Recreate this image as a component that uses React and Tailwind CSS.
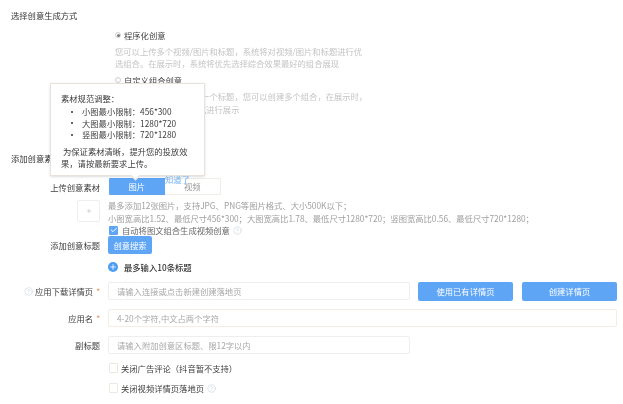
import React from 'react';
import { Check, CircleHelp, Plus } from 'lucide-react';

const font = { fontFamily: '"Noto Sans CJK SC", "Liberation Sans", sans-serif' };

function Radio ({ on, label, className }) {
  return (
    <div className={`flex items-center h-[14px] ${className}`}>
      <span className="flex items-center justify-center w-[6px] h-[6px] rounded-full border border-[#cfcfcf]">
        {on && <span className="w-[3px] h-[3px] rounded-full bg-[#777]" />}
      </span>
      <span className="ml-[3px] text-[#444]">{label}</span>
    </div>
  );
}

function Help ({ className }) {
  return <CircleHelp className={`w-[9px] h-[9px] text-[#c3d3e0] ${className}`} strokeWidth={1.5} />;
}

function Row ({ label, star, help, className, children }) {
  return (
    <div className={`flex items-center gap-[8px] ${className}`}>
      <div className="w-[100px] flex items-center justify-end text-[#3d3d3d] shrink-0">
        {help && <Help className="mr-[2px]" />}
        <span>{label}</span>
        {star && <span className="ml-[3px] text-[#e2925c]">*</span>}
      </div>
      {children}
    </div>
  );
}

function Field ({ placeholder, className }) {
  return (
    <input
      placeholder={placeholder}
      className={`h-[18px] rounded-[2px] border px-[8px] text-[8.3px] placeholder:text-[#a8a8a8] outline-none ${className}`}
    />
  );
}

function CheckLine ({ label, children, className }) {
  return (
    <div className={`flex items-center pl-[109px] h-[10px] ${className}`}>
      <span className="w-[9px] h-[10px] border border-[#f0e8e0] rounded-[1px]" />
      <span className="ml-[3px] text-[#3d3d3d]">{label}</span>
      {children}
    </div>
  );
}

function Tooltip () {
  return (
    <div className="absolute left-[50px] top-[83px] w-[155px] h-[93px] bg-white border border-[#e8e2dc] px-[10px] pt-[9px] text-[#3d3d3d] shadow-sm leading-[11.5px]">
      <div>素材规范调整：</div>
      <ul className="mt-[1.5px]">
        <li className="flex items-center"><span className="ml-[10px] mr-[9px] w-[2px] h-[2px] rounded-full bg-[#333]" />小图最小限制：456*300</li>
        <li className="flex items-center"><span className="ml-[10px] mr-[9px] w-[2px] h-[2px] rounded-full bg-[#333]" />大图最小限制：1280*720</li>
        <li className="flex items-center"><span className="ml-[10px] mr-[9px] w-[2px] h-[2px] rounded-full bg-[#333]" />竖图最小限制：720*1280</li>
      </ul>
      <p className="mt-[4px] leading-[12px] indent-[2px]">为保证素材清晰，提升您的投放效果，请按最新要求上传。</p>
      <span className="absolute left-[81px] -bottom-[4px] w-[7px] h-[7px] rotate-45 bg-white border-r border-b border-[#e8e2dc]" />
    </div>
  );
}

export default function App () {
  return (
    <div className="relative w-[623px] h-[404px] overflow-hidden bg-white text-[8.3px] leading-[14px] blur-[0.5px]" style={font}>
      <div className="pl-[11px] pt-[8px] h-[22px] text-[#333]">选择创意生成方式</div>

      <div className="pl-[115px] text-[#c4c4c4]">
        <Radio on label="程序化创意" className="mt-[6px]" />
        <p className="mt-[3px] leading-[12px]">您可以上传多个视频/图片和标题，系统将对视频/图片和标题进行优<br />选组合。在展示时，系统将优先选择综合效果最好的组合展现</p>
        <Radio label="自定义组合创意" className="mt-[4px]" />
        <p className="mt-[3px] leading-[13px]">您可以上传视频/图片和一个标题，您可以创建多个组合，在展示时，<br />系统将按照您的组合方式进行展示</p>
      </div>

      <div className="pl-[11px] mt-[35px] text-[#333]">添加创意素材</div>

      <Row label="上传创意素材" className="mt-[13px] h-[17px]">
        <div className="flex h-[17px] w-[112px] ml-[1px] text-center leading-[17px]">
          <span className="flex-1 bg-[#5fa5f6] text-white rounded-l-[1px]">图片</span>
          <span className="flex-1 border border-l-0 border-[#f0ede8] text-[#999] leading-[15px] rounded-r-[1px]">视频</span>
        </div>
      </Row>

      <div className="flex gap-[8px] mt-[5px]">
        <div className="w-[100px] flex justify-end shrink-0">
          <div className="flex items-center justify-center w-[23px] h-[22px] border border-[#eeeeee] rounded-[2px] text-[#999]">
            <Plus className="w-[6px] h-[6px]" strokeWidth={1.5} />
          </div>
        </div>
        <div className="text-[#a0a0a0] -mt-[1px] leading-[12.5px] whitespace-nowrap">
          <div>最多添加12张图片，支持JPG、PNG等图片格式、大小500K以下；</div>
          <div>小图宽高比1.52、最低尺寸456*300；大图宽高比1.78、最低尺寸1280*720；竖图宽高比0.56、最低尺寸720*1280；</div>
        </div>
      </div>

      <div className="flex items-center pl-[109px] mt-[1px] h-[10px]">
        <span className="flex items-center justify-center w-[9px] h-[9px] bg-[#5fa5f6] rounded-[1px]">
          <Check className="w-[8px] h-[8px] text-white" strokeWidth={3} />
        </span>
        <span className="ml-[4px] text-[#666]">自动将图文组合生成视频创意</span>
        <Help className="ml-[3px]" />
      </div>

      <Row label="添加创意标题" className="mt-[1px] h-[18px]">
        <button className="w-[44px] h-[18px] bg-[#5fa5f6] text-white rounded-[2px]">创意搜索</button>
      </Row>

      <div className="flex items-center pl-[108px] mt-[7px] h-[12px]">
        <span className="flex items-center justify-center w-[10px] h-[10px] rounded-full bg-[#4d9cf3]">
          <Plus className="w-[8px] h-[8px] text-white" strokeWidth={2.5} />
        </span>
        <span className="ml-[6px] text-[#333] font-medium">最多输入10条标题</span>
      </div>

      <Row label="应用下载详情页" star help className="mt-[9px] h-[18px]">
        <Field placeholder="请输入连接或点击新建创建落地页" className="w-[302px] border-[#eeeeee]" />
        <button className="w-[95px] h-[19px] bg-[#5fa5f6] text-white rounded-[2px]">使用已有详情页</button>
        <button className="ml-[1px] w-[95px] h-[19px] bg-[#5fa5f6] text-white rounded-[2px]">创建详情页</button>
      </Row>

      <Row label="应用名" star className="mt-[9px] h-[18px]">
        <Field placeholder="4-20个字符,中文占两个字符" className="w-[509px] border-[#f5ece4]" />
      </Row>

      <Row label="副标题" className="mt-[9px] h-[18px]">
        <Field placeholder="请输入附加创意区标题、限12字以内" className="w-[302px] border-[#eeeeee]" />
      </Row>

      <CheckLine label="关闭广告评论（抖音暂不支持）" className="mt-[9px]" />
      <CheckLine label="关闭视频详情页落地页" className="mt-[10px]">
        <Help className="ml-[3px]" />
      </CheckLine>

      <Tooltip />
      <span className="absolute left-[165px] top-[172px] text-[#6fb0f5]">知道了</span>
    </div>
  );
}
